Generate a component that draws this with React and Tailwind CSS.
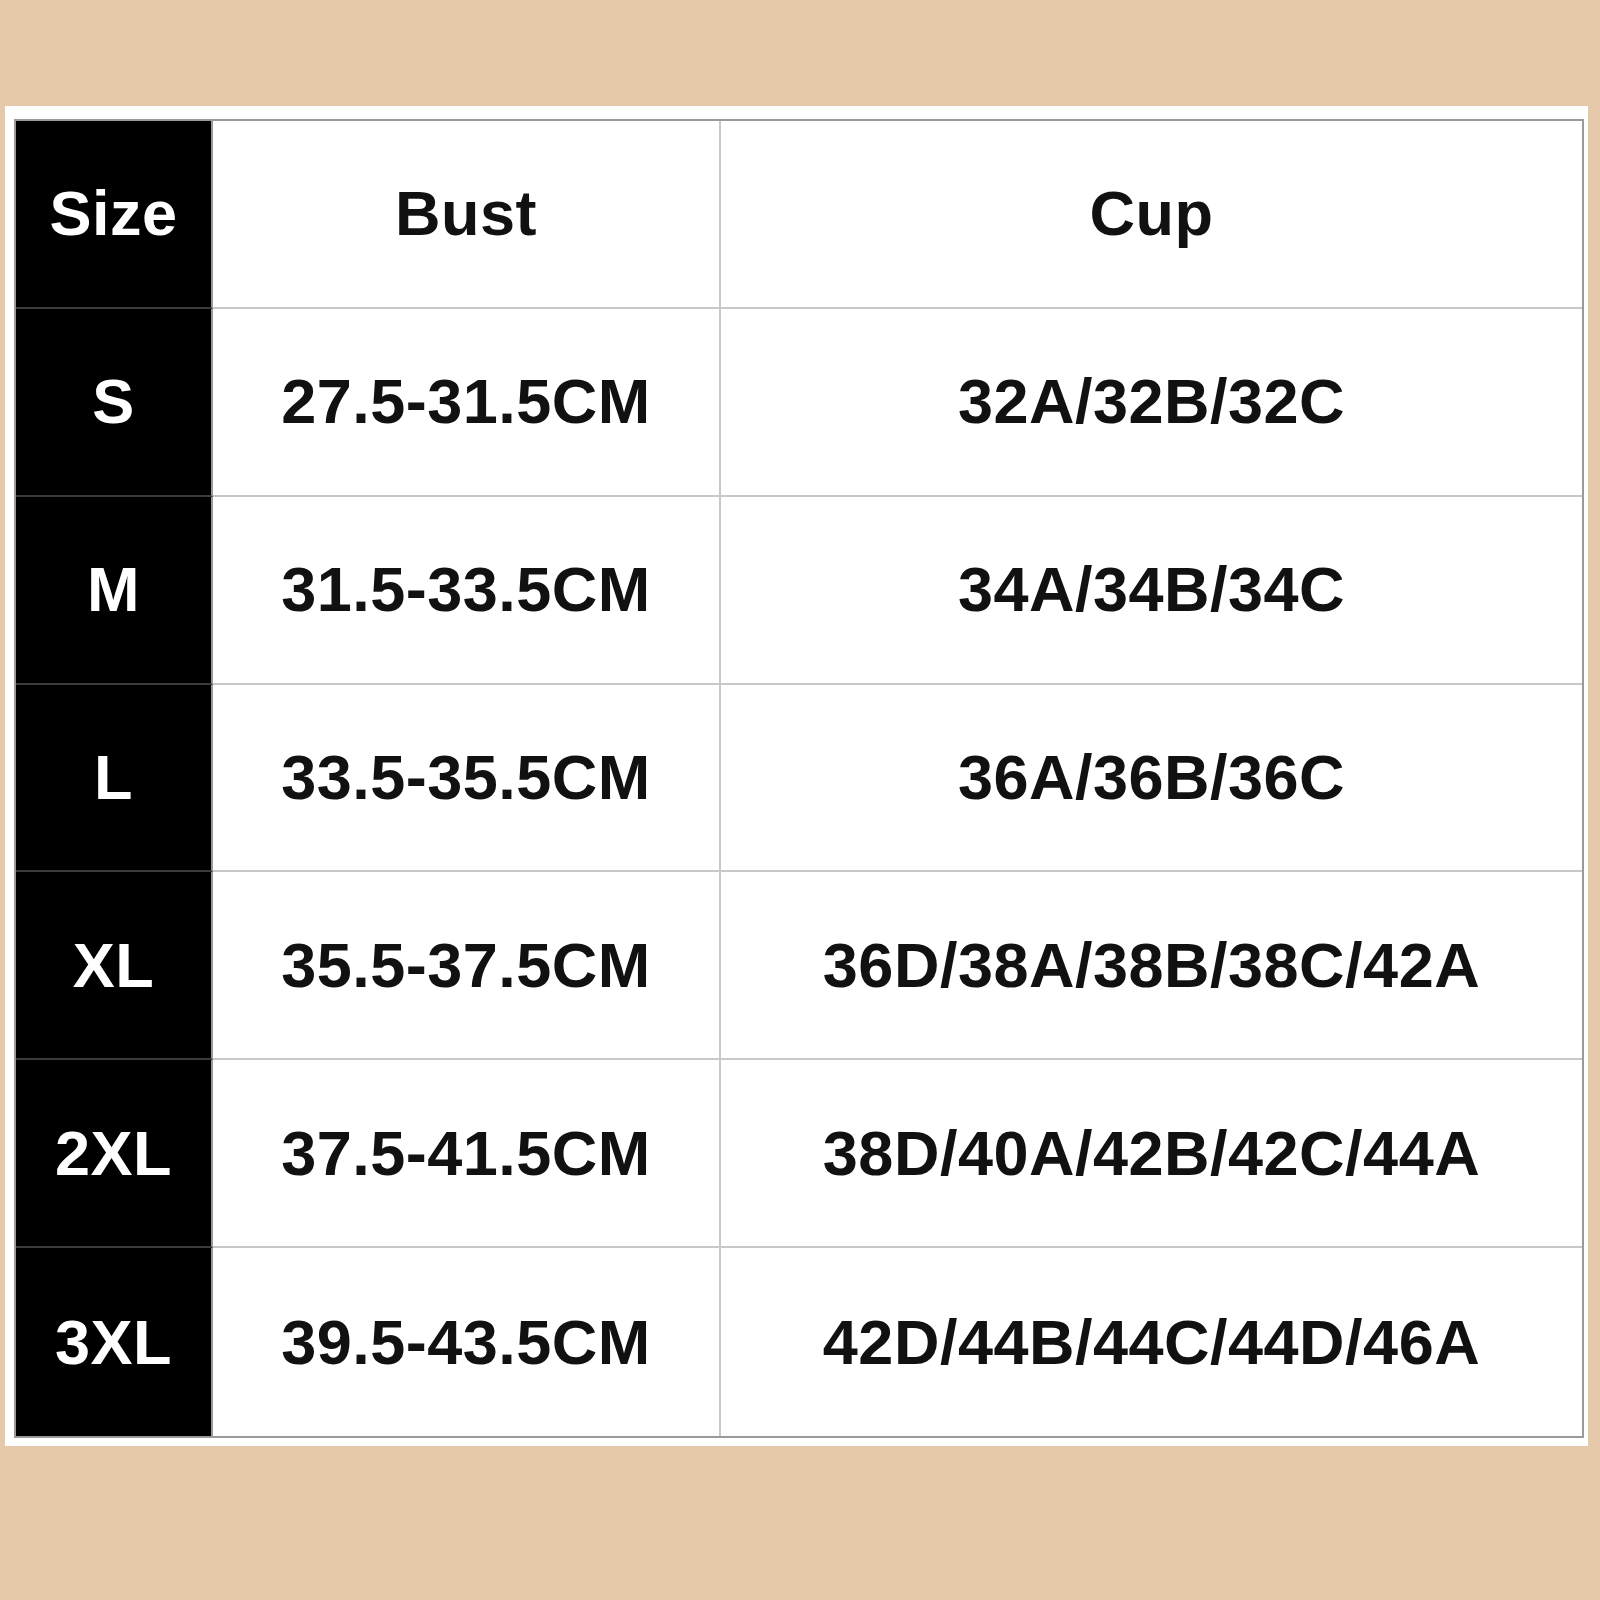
const rows = [
    ["S", "27.5-31.5CM", "32A/32B/32C"],
    ["M", "31.5-33.5CM", "34A/34B/34C"],
    ["L", "33.5-35.5CM", "36A/36B/36C"],
    ["XL", "35.5-37.5CM", "36D/38A/38B/38C/42A"],
    ["2XL", "37.5-41.5CM", "38D/40A/42B/42C/44A"],
    ["3XL", "39.5-43.5CM", "42D/44B/44C/44D/46A"],
];

const App = () => {
    const all = [["Size", "Bust", "Cup"], ...rows];
    return (
        <div className="w-[1600px] h-[1600px] bg-[#e5c9aa] pt-[106px] pl-[5px]">
            <div className="w-[1583px] h-[1340px] bg-white pt-[13px] pl-[9px]">
                <div
                    className="w-[1570px] h-[1319px] border-2 border-[#9a9a9a] grid grid-cols-[197px_508px_1fr] grid-rows-7 text-[63px] tracking-[0.5px] font-bold leading-none"
                    style={{ fontFamily: '"Liberation Sans", Arial, sans-serif' }}
                >
                    {all.map((r, i) => {
                        const last = i === all.length - 1;
                        return [
                            <div
                                key={`s${i}`}
                                className={`bg-black text-white flex items-center justify-center border-r-2 border-r-[#9a9a9a] ${last ? "" : "border-b-2 border-b-[#3a3a3a]"}`}
                            >
                                {r[0]}
                            </div>,
                            <div
                                key={`b${i}`}
                                className={`text-[#111] flex items-center justify-center border-r-2 border-r-[#c8c8c8] ${last ? "" : "border-b-2 border-b-[#c8c8c8]"}`}
                            >
                                {r[1]}
                            </div>,
                            <div
                                key={`c${i}`}
                                className={`text-[#111] flex items-center justify-center ${last ? "" : "border-b-2 border-b-[#c8c8c8]"}`}
                            >
                                {r[2]}
                            </div>,
                        ];
                    })}
                </div>
            </div>
        </div>
    );
};

export default App;
